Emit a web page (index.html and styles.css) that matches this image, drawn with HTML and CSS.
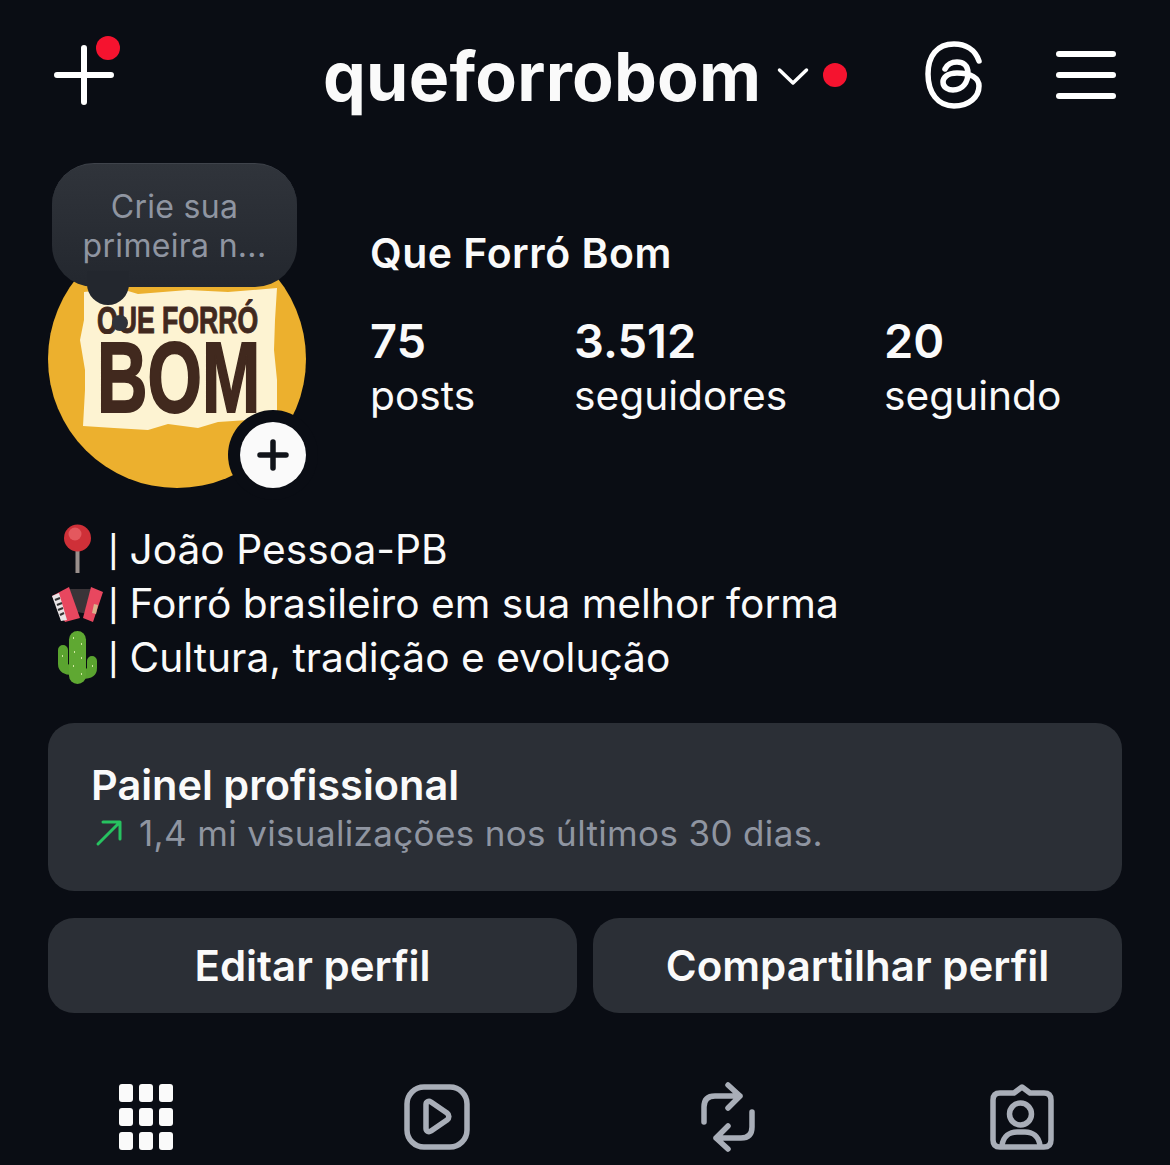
FILE: index.html
```html
<!DOCTYPE html>
<html lang="pt-BR">
<head>
    <meta charset="UTF-8">
    <meta name="viewport" content="width=device-width, initial-scale=1.0">
    <title>queforrobom</title>
    <link rel="stylesheet" href="styles.css">
</head>
<body>
    <header class="topbar">
        <div class="new-post">
            <svg width="60" height="60" viewBox="0 0 60 60"><path d="M30 3V57M3 30H57" stroke="#fff" stroke-width="6" stroke-linecap="round"/></svg>
            <span class="new-dot"></span>
        </div>
        <div class="account">
            <span class="username">queforrobom</span>
            <svg class="chevron" width="32" height="20" viewBox="0 0 32 20"><path d="M2.500 3L16 16L29.500 3" fill="none" stroke="#fff" stroke-width="3.500" stroke-linecap="round" stroke-linejoin="round"/></svg>
            <span class="red-dot"></span>
        </div>
        <div class="top-icons">
            <svg width="58" height="68" viewBox="0 0 58 68"><path d="M54 20C50 8 40 3 29 3C12 3 3 15 3 33C3 52 13 65 29 65C44 65 54 56 54 45C54 37 46 32 32 32C22 32 18 37 18 41C18 47 24 49 28 49C38 49 43 41 43 32C43 24 38 21 32 21C26 21 22 24 20 28" fill="none" stroke="#fff" stroke-width="5.500" stroke-linecap="round"/></svg>
            <div class="burger"><span></span><span></span><span></span></div>
        </div>
    </header>

    <section class="profile">
        <div class="avatar">
            <svg width="258" height="258" viewBox="0 0 258 258">
                <clipPath id="logo-clip"><rect x="0" y="60" width="258" height="44"/></clipPath>
                <circle cx="129" cy="129" r="129" fill="#ecb02e"/>
                <path d="M36 62L70 58L90 64L140 60L180 62L229 58L227 90L226 120L229 150L229 194L200 190L170 192L150 198L120 194L100 200L66 198L35 196L37 160L37 140L32 110L36 90Z" fill="#fdf3d2"/>
                <g clip-path="url(#logo-clip)"><text class="logo-small" transform="translate(49 103) scale(.72 1)">QUE FORRÓ</text></g>
                <text class="logo-big" transform="translate(49 182) scale(.7 1)">BOM</text>
            </svg>
            <div class="note">
                <span class="note-text">Crie sua<br>primeira n...</span>
                <span class="note-tail"></span>
                <span class="note-dot"></span>
            </div>
            <div class="add-story">
                <svg width="34" height="34" viewBox="0 0 34 34"><path d="M17 4V30M4 17H30" stroke="#11141a" stroke-width="5.500" stroke-linecap="round"/></svg>
            </div>
        </div>
        <div class="info">
            <div class="name">Que Forró Bom</div>
            <div class="stats">
                <div class="stat stat-posts"><b>75</b><span>posts</span></div>
                <div class="stat stat-followers"><b>3.512</b><span>seguidores</span></div>
                <div class="stat"><b>20</b><span>seguindo</span></div>
            </div>
        </div>
    </section>

    <section class="bio">
        <div class="bio-line">
            <svg class="emoji" width="60" height="54" viewBox="0 0 60 54">
                <rect x="27.500" y="24" width="4" height="27" fill="#9a8f8c"/>
                <circle cx="29.500" cy="16" r="13.500" fill="#cf3038"/>
                <circle cx="27" cy="12" r="6.500" fill="#e4585e"/>
            </svg>
            <span class="pipe">|</span>
            <span>João Pessoa-PB</span>
        </div>
        <div class="bio-line">
            <svg class="emoji" width="60" height="54" viewBox="0 0 60 54">
                <path d="M17 13L43 13L40 38L29 36L22 38Z" fill="#3a3438"/>
                <path d="M4 20L21 11L32 42L17 46Z" fill="#e8475f"/>
                <path d="M4 20L11 17L19 44L13 45Z" fill="#e9e4e6"/>
                <path d="M7 24L12 22M9 29L14 27M10 34L15 32M12 39L16 37" stroke="#333" stroke-width="2"/>
                <path d="M43 11L55 16L45 46L35 42Z" fill="#e8475f"/>
                <path d="M46 28L50 29L48 38L44 37Z" fill="#d9b38c"/>
            </svg>
            <span class="pipe">|</span>
            <span>Forró brasileiro em sua melhor forma</span>
        </div>
        <div class="bio-line">
            <svg class="emoji" width="60" height="54" viewBox="0 0 60 54">
                <path d="M15 20V34Q15 40 24 40" fill="none" stroke="#5aa32f" stroke-width="10" stroke-linecap="round"/>
                <path d="M44 31V38Q44 44 34 44" fill="none" stroke="#5aa32f" stroke-width="10" stroke-linecap="round"/>
                <rect x="21" y="1" width="17" height="53" rx="8.500" fill="#5fa832"/>
                <path d="M25 8H26M33 14H34M26 22H27M33 28H34M25 36H26M33 44H34M14 26H15M44 36H45" stroke="#cfe6a0" stroke-width="2"/>
            </svg>
            <span class="pipe">|</span>
            <span>Cultura, tradição e evolução</span>
        </div>
    </section>

    <section class="panel">
        <div class="panel-title">Painel profissional</div>
        <div class="panel-sub">
            <svg width="28" height="28" viewBox="0 0 28 28"><path d="M3 25L25 3M8 3H25V20" fill="none" stroke="#27c260" stroke-width="3" stroke-linecap="round" stroke-linejoin="round"/></svg>
            <span>1,4 mi visualizações nos últimos 30 dias.</span>
        </div>
    </section>

    <section class="actions">
        <button class="btn">Editar perfil</button>
        <button class="btn">Compartilhar perfil</button>
    </section>

    <nav class="tabs">
        <div class="tab">
            <svg width="54" height="66" viewBox="0 0 54 66" fill="#fafafa">
                <rect width="14" height="18" rx="3"/><rect x="20" width="14" height="18" rx="3"/><rect x="40" width="14" height="18" rx="3"/>
                <rect y="24" width="14" height="18" rx="3"/><rect x="20" y="24" width="14" height="18" rx="3"/><rect x="40" y="24" width="14" height="18" rx="3"/>
                <rect y="48" width="14" height="18" rx="3"/><rect x="20" y="48" width="14" height="18" rx="3"/><rect x="40" y="48" width="14" height="18" rx="3"/>
            </svg>
        </div>
        <div class="tab">
            <svg width="66" height="66" viewBox="0 0 66 66" fill="none" stroke="#a9aeb8" stroke-width="5.500" stroke-linejoin="round">
                <rect x="3" y="3" width="60" height="60" rx="17"/>
                <path d="M22 20.500C22 18 24.500 16.500 27 18L43 29C45.500 31 45.500 34 43 36L27 47C24.500 48.500 22 47 22 44.500Z"/>
            </svg>
        </div>
        <div class="tab">
            <svg width="56" height="70" viewBox="0 0 56 70" fill="none" stroke="#a9aeb8" stroke-width="5.500" stroke-linecap="round" stroke-linejoin="round">
                <path d="M5 40V25Q5 14 16 14H41M29 3L41 14L29 26"/>
                <path d="M53 30V45Q53 56 42 56H17M29 44L17 56L29 67"/>
            </svg>
        </div>
        <div class="tab">
            <svg width="66" height="66" viewBox="0 0 66 66" fill="none" stroke="#a9aeb8" stroke-width="5.500" stroke-linejoin="round">
                <path d="M12 9H26L34 3L42 9H56Q63 9 63 16V56Q63 63 56 63H12Q5 63 5 56V16Q5 9 12 9Z"/>
                <circle cx="32.500" cy="30" r="11"/>
                <path d="M14 62C15 52 22 48 29 48H37C44 48 51 52 52 62"/>
            </svg>
        </div>
    </nav>
</body>
</html>
```

FILE: styles.css
```css
html, body {
    height: 1165px;
    overflow: hidden;
}
body {
    font-family: Inter, "Noto Sans", sans-serif;
    background-color: #0a0d14;
    color: #fafafa;
    margin: 0;
    padding: 0;
}

/* top bar */
.topbar {
    height: 150px;
    display: flex;
    align-items: center;
    box-sizing: border-box;
    padding: 0 54px;
}
.new-post {
    position: relative;
    width: 60px;
    height: 60px;
}
.new-dot {
    position: absolute;
    top: -9px;
    right: -6px;
    width: 24px;
    height: 24px;
    border-radius: 50%;
    background-color: #f5132f;
}
.account {
    display: flex;
    align-items: center;
    margin-left: 209px;
}
.username {
    font-size: 68px;
    line-height: 78px;
    padding-top: 2px;
    font-weight: 700;
    letter-spacing: 0.25px;
}
.chevron {
    margin-left: 16px;
    margin-top: 4px;
}
.red-dot {
    width: 24px;
    height: 24px;
    border-radius: 50%;
    background-color: #f5132f;
    margin-left: 14px;
}
.top-icons {
    display: flex;
    align-items: center;
    margin-left: auto;
    gap: 73px;
}
.burger {
    width: 60px;
    display: flex;
    flex-direction: column;
    gap: 15px;
}
.burger span {
    height: 6px;
    background-color: #fff;
    border-radius: 3px;
}

/* profile */
.profile {
    display: flex;
    margin: 80px 0 0 48px;
}
.avatar {
    position: relative;
    width: 258px;
    height: 258px;
}
.avatar svg {
    display: block;
}
.logo-small {
    font-family: "Liberation Sans", sans-serif;
    font-weight: 700;
    font-size: 37px;
    fill: #41291e;
    stroke: #41291e;
    stroke-width: 1px;
}
.logo-big {
    font-family: "Liberation Sans", sans-serif;
    font-weight: 700;
    font-size: 100px;
    fill: #41291e;
    stroke: #41291e;
    stroke-width: 2px;
}
.note {
    position: absolute;
    top: -67px;
    left: 4px;
    width: 245px;
    height: 124px;
    border-radius: 42px;
    border-top: 1px solid #3f434b;
    box-sizing: border-box;
    background: linear-gradient(#30343b, #23272e);
    display: flex;
    align-items: center;
    justify-content: center;
    text-align: center;
}
.note-text {
    font-size: 32px;
    line-height: 39px;
    color: #8f95a1;
    letter-spacing: 0.3px;
}
.note-tail {
    position: absolute;
    left: 35px;
    bottom: -18px;
    width: 42px;
    height: 34px;
    border-radius: 0 0 21px 21px;
    background-color: #23272e;
}
.note-dot {
    position: absolute;
    left: 60px;
    bottom: -44px;
    width: 16px;
    height: 16px;
    border-radius: 50%;
    background-color: #2f333b;
}
.add-story {
    position: absolute;
    right: 0;
    bottom: 0;
    width: 66px;
    height: 66px;
    border-radius: 50%;
    background-color: #fafafa;
    box-shadow: 0 0 0 12px #0a0d14;
    display: flex;
    align-items: center;
    justify-content: center;
}
.info {
    margin-left: 64px;
}
.name {
    font-size: 41px;
    line-height: 46px;
    font-weight: 600;
    letter-spacing: 0.5px;
}
.stats {
    display: flex;
    margin-top: 38px;
}
.stat {
    display: flex;
    flex-direction: column;
}
.stat-posts {
    width: 204px;
}
.stat-followers {
    width: 310px;
}
.stat b {
    font-size: 47px;
    line-height: 54px;
    font-weight: 600;
}
.stat span {
    font-size: 40.700px;
    line-height: 54px;
    position: relative;
    top: 1px;
}

/* bio */
.bio {
    margin: 34px 0 0 48px;
}
.bio-line {
    display: flex;
    height: 54px;
    align-items: center;
    font-size: 40.700px;
}
.emoji {
    flex-shrink: 0;
}
.pipe {
    width: 21.500px;
    flex-shrink: 0;
    font-size: 31px;
    font-weight: 500;
    padding-top: 5px;
}

/* panel and buttons */
.panel {
    margin: 39px 48px 0;
    height: 168px;
    box-sizing: border-box;
    padding: 38px 43px 0;
    background-color: #2b2f36;
    border-radius: 26px;
}
.panel-title {
    font-size: 41.500px;
    line-height: 48px;
    font-weight: 600;
}
.panel-sub {
    display: flex;
    align-items: center;
    gap: 16px;
    font-size: 35px;
    letter-spacing: 0.35px;
    line-height: 48px;
    color: #8f95a1;
    padding-left: 4px;
}
.actions {
    display: flex;
    gap: 16px;
    margin: 27px 48px 0;
}
.btn {
    flex: 1;
    height: 95px;
    border: none;
    border-radius: 26px;
    background-color: #2b2f36;
    color: #fafafa;
    font-family: inherit;
    font-size: 42px;
    font-weight: 600;
}

/* tabs */
.tabs {
    display: grid;
    grid-template-columns: 292px 290px 290px 298px;
    margin-top: 70px;
}
.tab {
    display: flex;
    justify-content: center;
    align-items: center;
    height: 68px;
}
```
